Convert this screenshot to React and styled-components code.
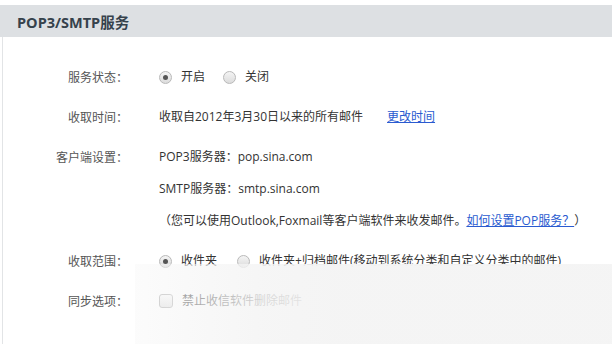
import React from "react";
import styled, { createGlobalStyle } from "styled-components";

const GlobalStyle = createGlobalStyle`
  html, body {
    margin: 0;
    padding: 0;
    background: #fff;
    font-family: "Noto Sans CJK SC", "Open Sans", sans-serif;
  }
`;

const Page = styled.div`
  position: relative;
  width: 612px;
  height: 344px;
  overflow: hidden;
  padding-top: 5px;
  box-sizing: border-box;
`;

const Header = styled.div`
  height: 32px;
  background: #dde0e3;
  display: flex;
  align-items: center;
  padding-left: 17px;
  font-family: "Open Sans", "Noto Sans CJK SC", sans-serif;
  font-weight: 700;
  font-size: 14.5px;
  color: #36424c;
`;

const Body = styled.div`
  margin-left: 2px;
  border-left: 1px solid #e2e4e6;
  min-height: 307px;
  padding-top: 30px;
  display: flex;
  flex-direction: column;
  gap: 20px;
`;

const Row = styled.div`
  display: flex;
  align-items: flex-start;
`;

const Label = styled.div`
  width: 125px;
  text-align: right;
  font-size: 12px;
  line-height: 20px;
  color: #555;
  flex-shrink: 0;
`;

const Value = styled.div`
  margin-left: 31px;
  display: flex;
  flex-direction: column;
  gap: 12px;
  font-size: 12px;
  line-height: 20px;
  color: #333;
`;

const Line = styled.div`
  display: flex;
  align-items: center;
  white-space: nowrap;
  font-family: "Open Sans", "Noto Sans CJK SC", sans-serif;
`;

const Option = styled.label`
  display: inline-flex;
  align-items: center;
  margin-right: ${(p) => p.$gap || 20}px;
`;

const Radio = styled.span`
  width: 11px;
  height: 11px;
  border-radius: 50%;
  border: 1px solid #b9b9b9;
  background: linear-gradient(#f4f4f4, #dcdcdc);
  margin-right: 9px;
  display: inline-flex;
  align-items: center;
  justify-content: center;
  &::after {
    content: "";
    width: 5px;
    height: 5px;
    border-radius: 50%;
    background: ${(p) => (p.$checked ? "#555" : "transparent")};
  }
`;

const Check = styled.span`
  width: 12px;
  height: 12px;
  border-radius: 3px;
  border: 1px solid #b5b5b5;
  background: linear-gradient(#fafafa, #e4e4e4);
  margin-right: 9px;
`;

const Link = styled.a`
  color: #2a5bd0;
  text-decoration: underline;
  margin-left: ${(p) => p.$gap || 0}px;
  cursor: pointer;
`;

const Fade = styled.div`
  position: absolute;
  left: 135px;
  top: 264px;
  right: 0;
  bottom: 0;
  background: linear-gradient(
    to right,
    rgba(245, 245, 245, 0.35) 0px,
    rgba(245, 245, 245, 0.55) 40px,
    rgba(244, 244, 244, 0.85) 130px,
    rgba(244, 244, 244, 0.97) 200px
  );
`;

const App = () => {
  return (
    <Page>
      <GlobalStyle />
      <Header>POP3/SMTP服务</Header>
      <Body>
        <Row>
          <Label>服务状态：</Label>
          <Value>
            <Line>
              <Option $gap={18}>
                <Radio $checked />
                开启
              </Option>
              <Option>
                <Radio />
                关闭
              </Option>
            </Line>
          </Value>
        </Row>
        <Row>
          <Label>收取时间：</Label>
          <Value>
            <Line>
              收取自2012年3月30日以来的所有邮件
              <Link $gap={24}>更改时间</Link>
            </Line>
          </Value>
        </Row>
        <Row>
          <Label>客户端设置：</Label>
          <Value>
            <Line>POP3服务器：pop.sina.com</Line>
            <Line>SMTP服务器：smtp.sina.com</Line>
            <Line>
              （您可以使用Outlook,Foxmail等客户端软件来收发邮件。
              <Link>如何设置POP服务？</Link>）
            </Line>
          </Value>
        </Row>
        <Row>
          <Label>收取范围：</Label>
          <Value>
            <Line>
              <Option $gap={20}>
                <Radio $checked />
                收件夹
              </Option>
              <Option>
                <Radio />
                收件夹+归档邮件(移动到系统分类和自定义分类中的邮件)
              </Option>
            </Line>
          </Value>
        </Row>
        <Row>
          <Label>同步选项：</Label>
          <Value>
            <Line>
              <Option>
                <Check />
                禁止收信软件删除邮件
              </Option>
            </Line>
          </Value>
        </Row>
      </Body>
      <Fade />
    </Page>
  );
};

export default App;
